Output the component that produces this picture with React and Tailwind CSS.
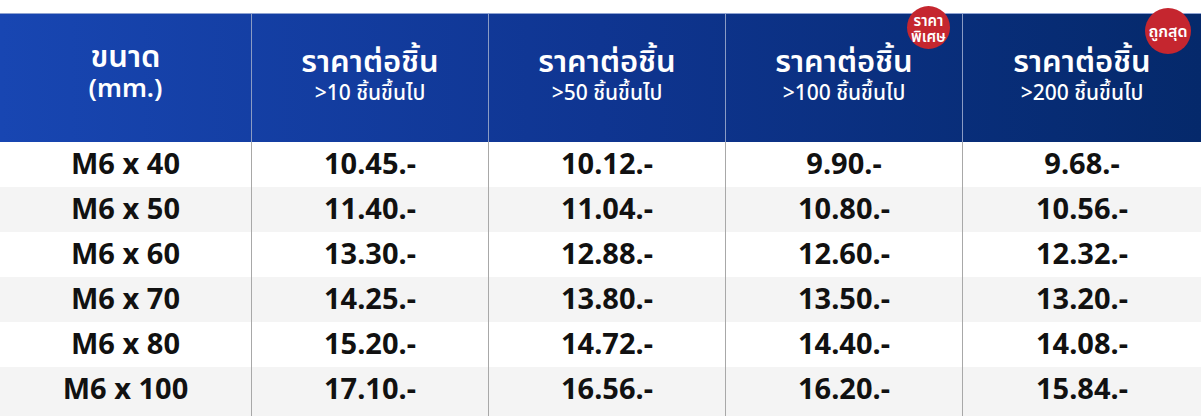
const font = { fontFamily: '"Noto Sans", "Noto Sans Thai", "Noto Sans CJK SC", sans-serif' };

const rows = [
  ["M6 x 40", "10.45.-", "10.12.-", "9.90.-", "9.68.-"],
  ["M6 x 50", "11.40.-", "11.04.-", "10.80.-", "10.56.-"],
  ["M6 x 60", "13.30.-", "12.88.-", "12.60.-", "12.32.-"],
  ["M6 x 70", "14.25.-", "13.80.-", "13.50.-", "13.20.-"],
  ["M6 x 80", "15.20.-", "14.72.-", "14.40.-", "14.08.-"],
  ["M6 x 100", "17.10.-", "16.56.-", "16.20.-", "15.84.-"],
];

const tiers = [">10", ">50", ">100", ">200"];

function PriceHead({ tier, badge }) {
  return (
    <div className="relative flex flex-col items-center justify-center pb-[8px] border-l border-[#8a9bc4] text-white">
      {badge}
      <div className="text-[31px] font-semibold leading-[36px]">ราคาต่อชิ้น</div>
      <div className="text-[21px] font-medium leading-[28px]">{tier} ชิ้นขึ้นไป</div>
    </div>
  );
}

export default function App() {
  return (
    <div className="w-[1201px] h-[416px] overflow-hidden bg-white pt-[13px]" style={font}>
      {/* header */}
      <div className="grid grid-cols-[251px_237px_237px_237px_1fr] h-[129px] border-t border-[#8fa3d2] bg-gradient-to-r from-[#1846b2] via-[#0f3591] to-[#05296b]">
        <div className="flex flex-col items-center justify-center pb-[14px] text-white">
          <div className="text-[31px] font-semibold leading-[32px]">ขนาด</div>
          <div className="text-[26px] font-semibold leading-[32px]">(mm.)</div>
        </div>
        <PriceHead tier={tiers[0]} />
        <PriceHead tier={tiers[1]} />
        <PriceHead
          tier={tiers[2]}
          badge={
            <div className="absolute left-[181px] top-[-8px] w-[43px] h-[43px] rounded-full bg-[#c5262f] flex flex-col items-center justify-center text-white text-[15px] font-semibold leading-[16px]">
              <span>ราคา</span>
              <span>พิเศษ</span>
            </div>
          }
        />
        <PriceHead
          tier={tiers[3]}
          badge={
            <div className="absolute left-[182px] top-[-6px] w-[46px] h-[46px] rounded-full bg-[#c5262f] flex items-center justify-center text-white text-[16px] font-semibold">
              ถูกสุด
            </div>
          }
        />
      </div>

      {/* body */}
      {rows.map((r, i) => (
        <div
          key={i}
          className={`grid grid-cols-[251px_237px_237px_237px_1fr] ${
            i === rows.length - 1 ? "h-[50px]" : "h-[45px]"
          } ${i % 2 === 1 ? "bg-[#f4f4f4]" : "bg-white"}`}
        >
          {r.map((c, j) => (
            <div
              key={j}
              className={`flex justify-center pt-[2px] text-[29px] font-bold text-[#111] leading-[38px] ${
                j > 0 ? "border-l border-[#a8a8a8]" : ""
              }`}
            >
              {c}
            </div>
          ))}
        </div>
      ))}
    </div>
  );
}
